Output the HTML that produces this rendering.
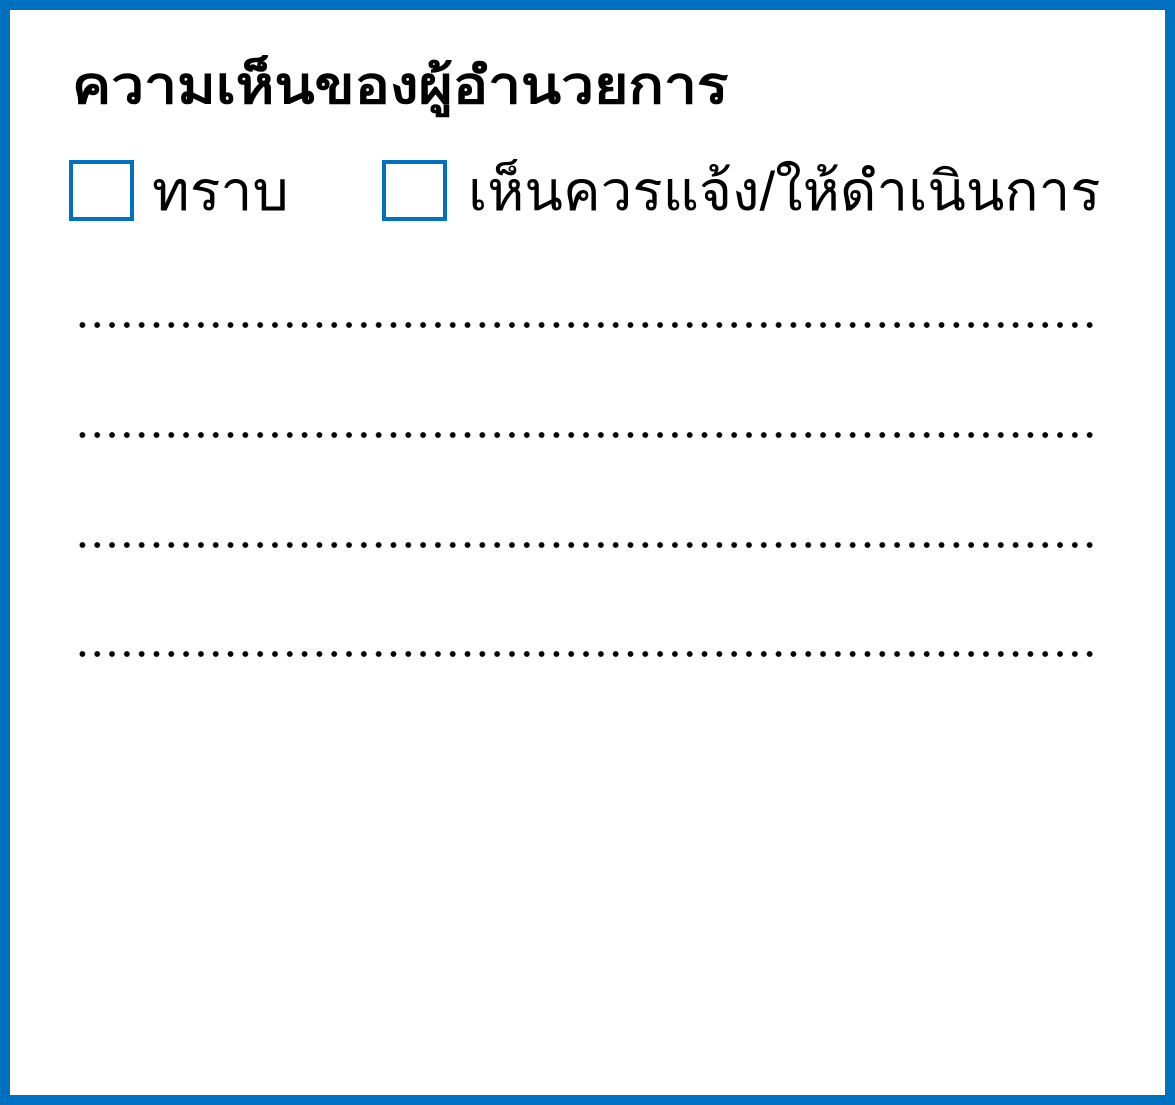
<!DOCTYPE html>
<html><head><meta charset="utf-8"><style>
body{margin:0;width:1175px;height:1105px;overflow:hidden;background:#fff}
.frame{position:absolute;left:0;top:0;width:1155px;height:1085px;border:10px solid #0070C0;background:#fff}
.t{position:absolute;font-family:"Liberation Sans","DejaVu Sans",sans-serif;color:#000;white-space:nowrap;line-height:1;transform-origin:0 0}
.cb{position:absolute;width:57px;height:53px;border:4px solid #0070C0}
.dots{position:absolute;left:75px;width:1024px;height:6px;background-image:radial-gradient(circle,#000 2.6px,transparent 3.1px);background-size:14.82px 6px;background-repeat:repeat-x}
</style></head><body>
<div class="frame"></div>
<div class="t" style="left:72px;top:60px;font-size:51px;font-weight:bold;transform:scaleX(1.15)">ความเห็นของผู้อำนวยการ</div>
<div class="cb" style="left:69px;top:160px"></div>
<div class="t" style="left:152px;top:164px;font-size:55px;transform:scaleX(1.04)">ทราบ</div>
<div class="cb" style="left:382px;top:160px"></div>
<div class="t" style="left:468px;top:164px;font-size:55px;transform:scaleX(1.025)">เห็นควรแจ้ง/ให้ดำเนินการ</div>
<div class="dots" style="top:322px"></div>
<div class="dots" style="top:432px"></div>
<div class="dots" style="top:542px"></div>
<div class="dots" style="top:651px"></div>
</body></html>
